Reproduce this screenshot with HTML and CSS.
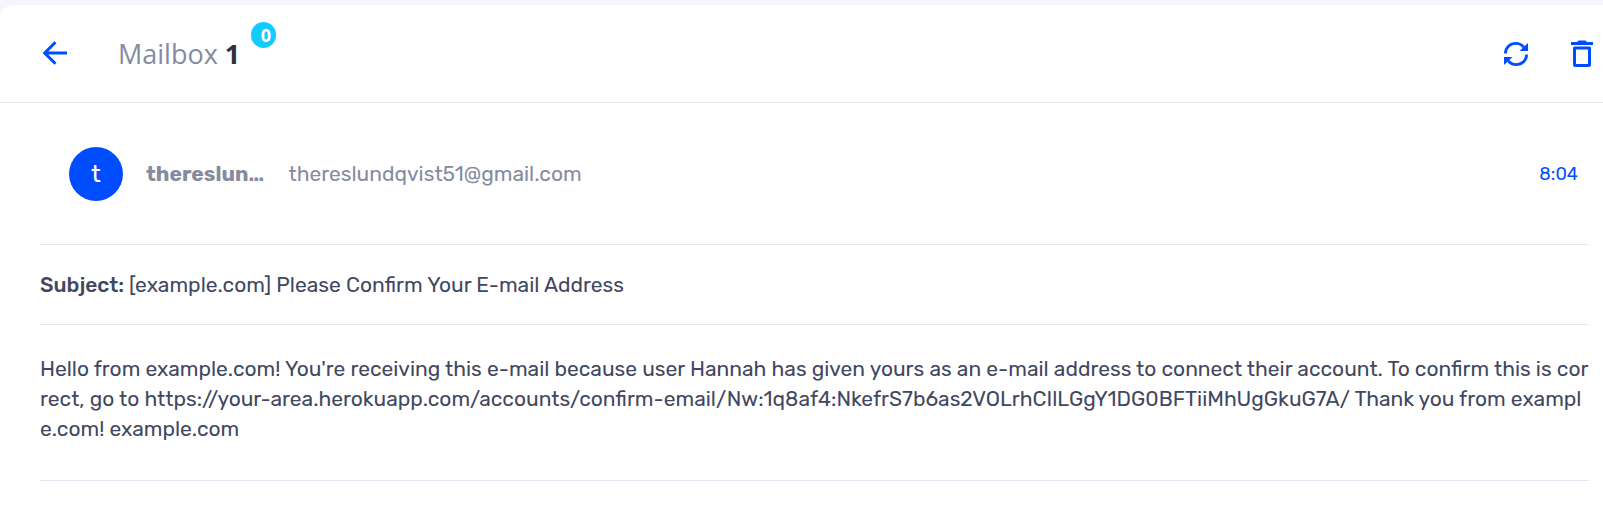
FILE: index.html
```html
<!DOCTYPE html>
<html lang="en">
<head>
<meta charset="utf-8">
<title>Mailbox</title>
<link rel="stylesheet" href="styles.css">
</head>
<body>
<main class="card">
  <header class="toolbar">
    <svg class="back" viewBox="0 0 24 24" width="24" height="24"><path d="M24 12H2M12.5 1.2 1.7 12l10.8 10.8" fill="none" stroke="currentColor" stroke-width="3"/></svg>
    <h1 class="title">Mailbox <b>1</b></h1>
    <span class="badge">0</span>
    <div class="actions">
      <svg viewBox="0 0 24 24" width="24" height="24"><path d="M1.400 11.500C1.400 5.500 6 1.400 12 1.400c3.200 0 6 1.600 8 4M22.600 12.500c0 6-4.600 10.100-10.600 10.100-3.200 0-6-1.600-8-4" fill="none" stroke="currentColor" stroke-width="2.800"/><path d="M24 1v8h-8.500zM0 23v-8h8.500z" fill="currentColor"/></svg>
      <svg class="trash" viewBox="0 0 22 28" width="22" height="28"><path d="M0 2h6l1.500-1.500h7L16 2h6v3H0z" fill="currentColor"/><path d="M3.500 8h15v16.500a1 1 0 0 1-1 1h-13a1 1 0 0 1-1-1z" fill="none" stroke="currentColor" stroke-width="3" stroke-linejoin="round"/></svg>
    </div>
  </header>
  <article class="mail">
    <section class="sender">
      <span class="avatar">t</span>
      <strong class="name">thereslun…</strong>
      <span class="email">thereslundqvist51@gmail.com</span>
      <time class="time">8:04</time>
    </section>
    <section class="subject"><strong class="label">Subject:</strong><span class="topic">[example.com] Please Confirm Your E-mail Address</span></section>
    <section class="message">
      <div>Hello from example.com! You're receiving this e-mail because user Hannah has given yours as an e-mail address to connect their account. To confirm this is cor</div>
      <div>rect, go to https://your-area.herokuapp.com/accounts/confirm-email/Nw:1q8af4:NkefrS7b6as2VOLrhCIlLGgY1DG0BFTiiMhUgGkuG7A/ Thank you from exampl</div>
      <div>e.com! example.com</div>
    </section>
  </article>
</main>
</body>
</html>
```
FILE: styles.css
```css
* { box-sizing: border-box; }
body { margin: 0; padding-top: 5px; height: 511px; overflow: hidden; background: #f5f6fb; color: #41475f; font: 21px/30px Rubik, Roboto, sans-serif; }
.card { height: 506px; background: #fff; border-top-left-radius: 14px; }
svg { display: block; flex: none; }
.toolbar { display: flex; height: 98px; padding: 0 10px 0 43px; border-bottom: 1px solid #e5e6f0; color: #004dff; }
.back { margin-top: 36px; }
.title { margin: 30px 0 0 51px; font: 400 27px/38px "Open Sans", sans-serif; color: #858b9f; white-space: nowrap; }
.title b { color: #2d2f3b; font-weight: 700; }
.badge { width: 25px; height: 26px; margin: 17px 0 0 11px; padding-left: 4px; border-radius: 13px; background: #13cbfd; color: #fff; font: 700 18px/26px "Open Sans", sans-serif; text-align: center; }
.actions { display: flex; gap: 43px; margin-left: auto; padding-top: 37px; }
.trash { margin-top: -2px; }
.mail { padding: 0 14px 0 40px; white-space: nowrap; }
.sender { display: flex; align-items: center; height: 142px; padding: 0 11px 0 29px; border-bottom: 1px solid #e5e6f2; }
.avatar { width: 54px; height: 54px; margin-right: 23px; border-radius: 50%; background: #004dff; color: #fff; font-size: 25px; line-height: 53px; text-align: center; }
.name { width: 142.5px; color: #858b9f; font-weight: 700; }
.email { color: #858b9f; }
.time { margin-left: auto; color: #004dff; font-size: 18px; }
.subject { display: flex; align-items: center; height: 80px; border-bottom: 1px solid #e5e6f2; }
.label { width: 89px; font-weight: 500; }
.message { height: 156px; padding-top: 29px; border-bottom: 1px solid #e5e6f2; }
```
